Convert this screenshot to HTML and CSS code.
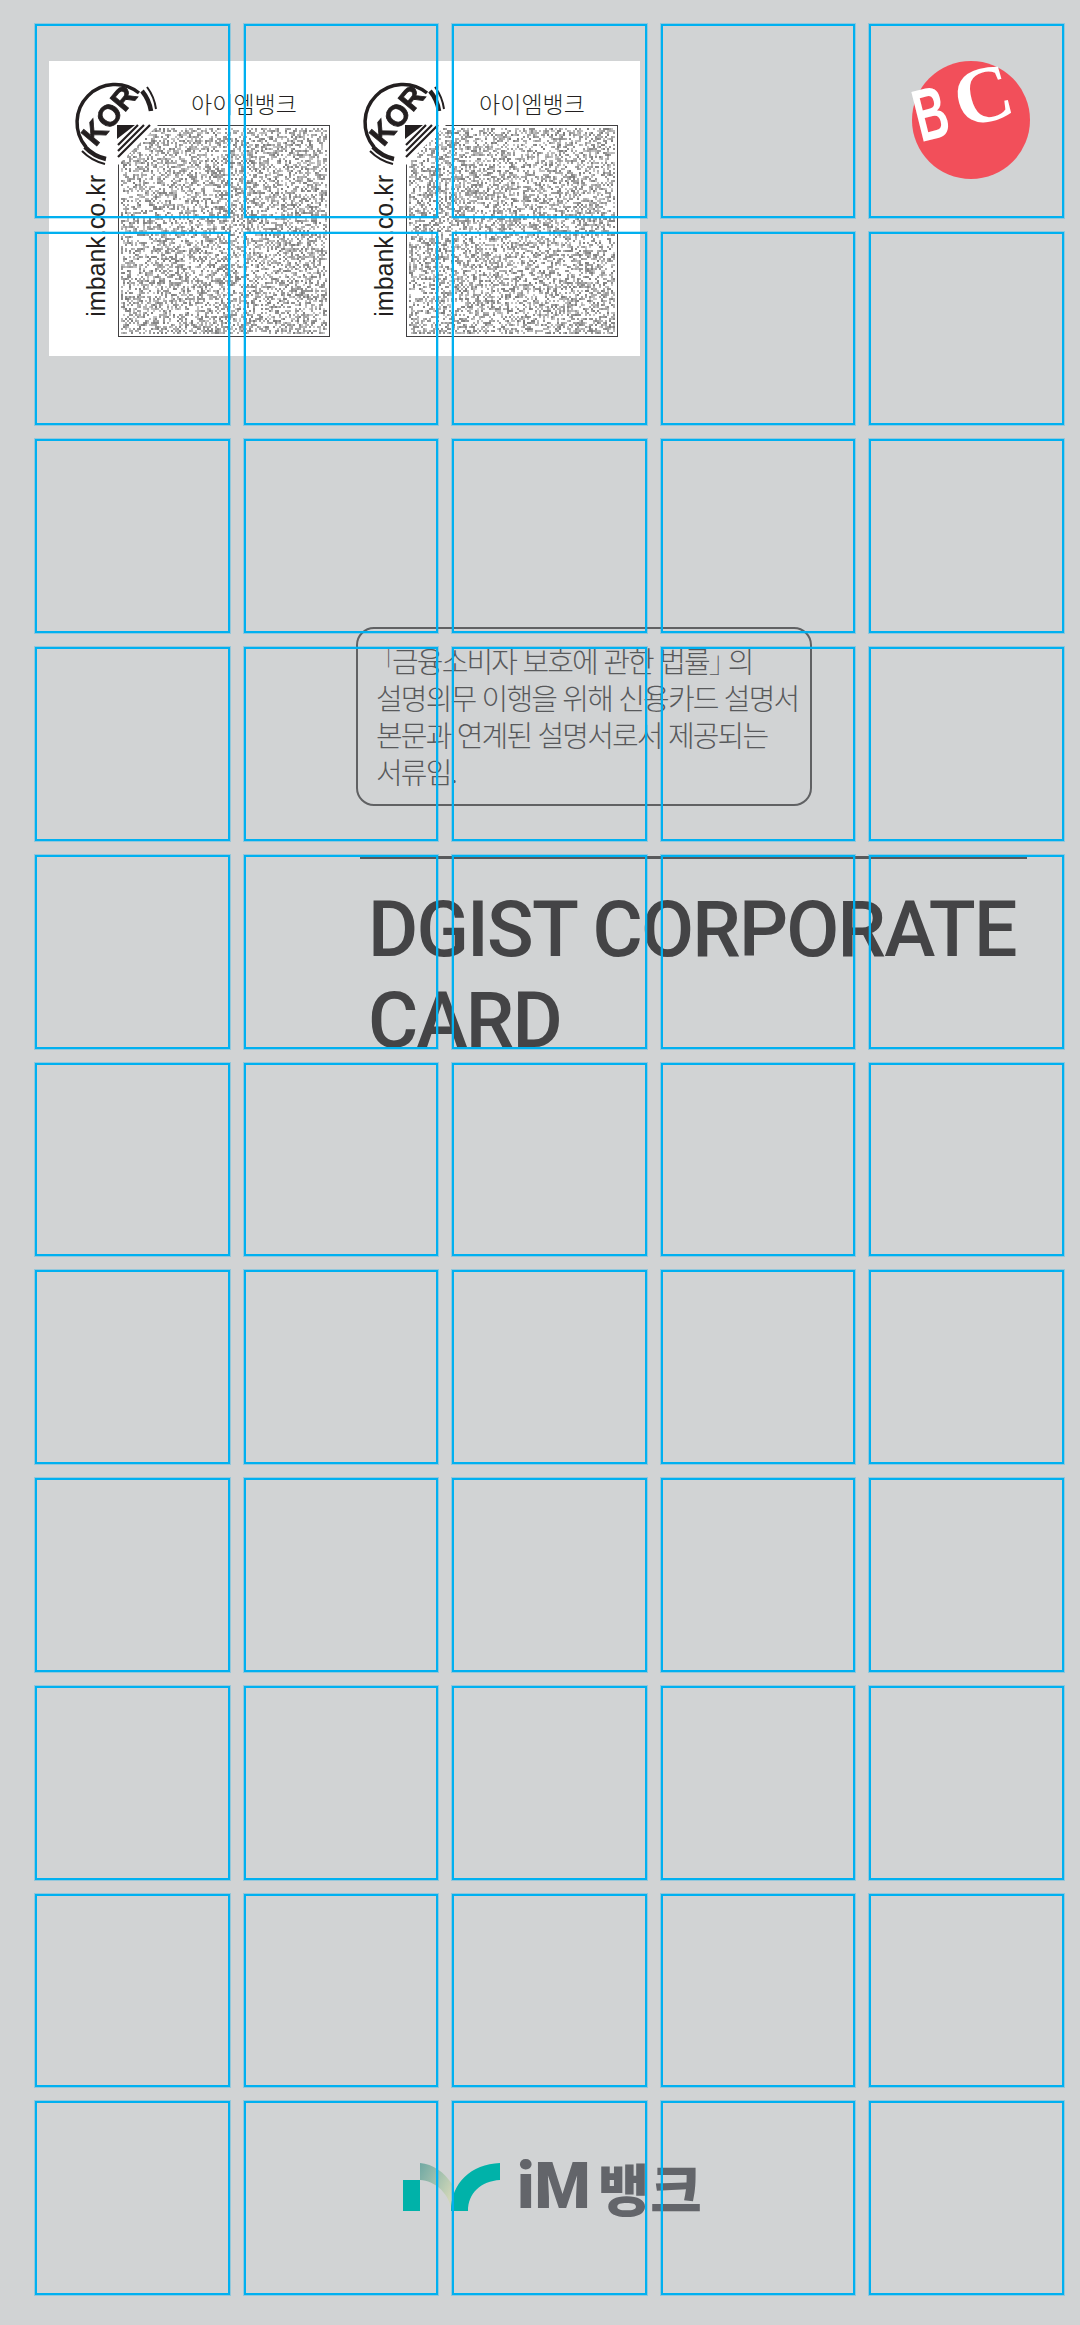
FILE: index.html
```html
<!DOCTYPE html>
<html lang="ko">

<head>
    <meta charset="UTF-8">
    <meta name="viewport" content="width=device-width, initial-scale=1.0">
    <title>DGIST CORPORATE CARD</title>
    <link rel="stylesheet" href="styles.css">
</head>

<body>
    <div class="page">
        <div class="top-row">
            <div class="qr-card">
                <div class="slip">
                    <div class="slip-url">imbank.co.kr</div>
                    <div class="slip-main">
                        <div class="slip-name">아이엠뱅크</div>
                        <canvas class="qr" width="212" height="212"></canvas>
                    </div>
                    <svg class="kor-badge" viewBox="0 0 84 90">
                        <path class="kor-ring" d="M12 67 A38 38 0 0 1 65 13" />
                        <path class="kor-band" d="M68 11 A41 41 0 0 1 77 31" />
                        <path class="kor-band thin" d="M73 7 A47 47 0 0 1 82 29" />
                        <path class="kor-band" d="M11 67 A41 41 0 0 0 32 79" />
                        <path class="kor-band thin" d="M8 71 A47 47 0 0 0 31 84" />
                        <text class="kor-text" transform="translate(43 42) rotate(-50)">KOR</text>
                        <polygon class="kor-mark" points="43,45 61,45 43,59" />
                        <path class="kor-stripes" d="M64 45 L44 65 M70 45 L44 71 M76 45 L44 77" />
                    </svg>
                </div>
                <div class="slip">
                    <div class="slip-url">imbank.co.kr</div>
                    <div class="slip-main">
                        <div class="slip-name">아이엠뱅크</div>
                        <canvas class="qr" width="212" height="212"></canvas>
                    </div>
                    <svg class="kor-badge" viewBox="0 0 84 90">
                        <path class="kor-ring" d="M12 67 A38 38 0 0 1 65 13" />
                        <path class="kor-band" d="M68 11 A41 41 0 0 1 77 31" />
                        <path class="kor-band thin" d="M73 7 A47 47 0 0 1 82 29" />
                        <path class="kor-band" d="M11 67 A41 41 0 0 0 32 79" />
                        <path class="kor-band thin" d="M8 71 A47 47 0 0 0 31 84" />
                        <text class="kor-text" transform="translate(43 42) rotate(-50)">KOR</text>
                        <polygon class="kor-mark" points="43,45 61,45 43,59" />
                        <path class="kor-stripes" d="M64 45 L44 65 M70 45 L44 71 M76 45 L44 77" />
                    </svg>
                </div>
            </div>
            <div class="bc-logo">
                <span class="bc-b">B</span><span class="bc-c">C</span>
            </div>
        </div>

        <div class="content">
            <div class="notice"><span class="bracket-open">「</span>금융소비자 보호에 관한 법률<span class="bracket-close">」</span>의<br>설명의무 이행을 위해 신용카드 설명서<br>본문과 연계된 설명서로서 제공되는<br>서류임.</div>
            <div class="title-block">
                <h1 class="title">DGIST CORPORATE CARD</h1>
            </div>
        </div>

        <div class="footer-logo">
            <svg class="im-mark" viewBox="0 0 97 48">
                <defs>
                    <linearGradient id="leaf" x1="0" y1="0" x2="1" y2="0.7">
                        <stop offset="0" stop-color="#6fa8a3" />
                        <stop offset="1" stop-color="#d0d6b8" />
                    </linearGradient>
                </defs>
                <rect class="im-teal" x="0" y="17" width="17" height="31" />
                <path fill="url(#leaf)" d="M17 0 C30 1 41 9 49 21 L48 44 C44 29 32 18 17 17 Z" />
                <path class="im-teal" d="M48 48 C48 20 68 1 97 0 L97 17 C78 18 65 30 65 48 Z" />
            </svg>
            <span class="im-latin">iM</span>
            <span class="im-korean">뱅크</span>
        </div>
    </div>

    <div class="guide-grid">
        <div class="guide"></div><div class="guide"></div><div class="guide"></div><div class="guide"></div><div class="guide"></div>
        <div class="guide"></div><div class="guide"></div><div class="guide"></div><div class="guide"></div><div class="guide"></div>
        <div class="guide"></div><div class="guide"></div><div class="guide"></div><div class="guide"></div><div class="guide"></div>
        <div class="guide"></div><div class="guide"></div><div class="guide"></div><div class="guide"></div><div class="guide"></div>
        <div class="guide"></div><div class="guide"></div><div class="guide"></div><div class="guide"></div><div class="guide"></div>
        <div class="guide"></div><div class="guide"></div><div class="guide"></div><div class="guide"></div><div class="guide"></div>
        <div class="guide"></div><div class="guide"></div><div class="guide"></div><div class="guide"></div><div class="guide"></div>
        <div class="guide"></div><div class="guide"></div><div class="guide"></div><div class="guide"></div><div class="guide"></div>
        <div class="guide"></div><div class="guide"></div><div class="guide"></div><div class="guide"></div><div class="guide"></div>
        <div class="guide"></div><div class="guide"></div><div class="guide"></div><div class="guide"></div><div class="guide"></div>
        <div class="guide"></div><div class="guide"></div><div class="guide"></div><div class="guide"></div><div class="guide"></div>
    </div>

    <script src="script.js"></script>
</body>

</html>
```

FILE: styles.css
```css
body {
    background: #d1d3d4;
    font-family: "Noto Sans CJK KR", "Noto Sans", sans-serif;
    margin: 0;
    width: 1080px;
    height: 2325px;
    position: relative;
    overflow: hidden;
}

.page {
    height: 2325px;
    display: flex;
    flex-direction: column;
}

.top-row {
    display: flex;
    justify-content: space-between;
    align-items: flex-start;
    padding: 61px 50px 0 49px;
}

.qr-card {
    background: #fff;
    width: 591px;
    height: 295px;
    padding: 0 0 0 25px;
    box-sizing: border-box;
    display: flex;
}

.slip {
    width: 288px;
    height: 295px;
    display: flex;
    position: relative;
    flex: none;
}

.slip-url {
    writing-mode: vertical-rl;
    transform: rotate(180deg);
    font-family: "Liberation Sans", Arial, sans-serif;
    font-size: 25px;
    line-height: 30px;
    color: #231f20;
    width: 30px;
    margin: 0 7px 39px 7px;
    align-self: flex-end;
    white-space: nowrap;
}

.slip-main {
    display: flex;
    flex-direction: column;
    width: 212px;
}

.slip-name {
    height: 64px;
    padding: 25px 0 0 40px;
    box-sizing: border-box;
    text-align: center;
    font-size: 23px;
    font-weight: 300;
    line-height: 34px;
    color: #231f20;
}

.qr {
    display: block;
    width: 212px;
    height: 212px;
}

.kor-badge {
    position: absolute;
    left: 0;
    top: 19px;
    width: 84px;
    height: 90px;
    overflow: visible;
}

.kor-ring {
    fill: none;
    stroke: #231f20;
    stroke-width: 3.5;
}

.kor-band {
    fill: none;
    stroke: #231f20;
    stroke-width: 4.5;
}

.kor-band.thin {
    stroke-width: 2;
}

.kor-text {
    font-family: "Liberation Sans", Arial, sans-serif;
    font-size: 30px;
    font-weight: 700;
    text-anchor: middle;
    fill: #231f20;
    stroke: #231f20;
    stroke-width: 0.8;
}

.kor-mark {
    fill: #231f20;
}

.kor-stripes {
    fill: none;
    stroke: #231f20;
    stroke-width: 2.2;
}

.bc-logo {
    width: 118px;
    height: 118px;
    border-radius: 50%;
    background: #f24f5a;
    color: #fff;
    font-family: "Liberation Serif", serif;
    font-size: 80px;
    font-weight: 700;
    line-height: 80px;
    position: relative;
}

.bc-b {
    position: absolute;
    left: -8px;
    top: 13px;
    font-family: "Liberation Sans", Arial, sans-serif;
    font-size: 74px;
    transform: rotate(-14deg) scaleX(0.62);
}

.bc-c {
    position: absolute;
    left: 42px;
    top: -6px;
    transform: rotate(-15deg);
}

.content {
    margin-left: 356px;
    width: 680px;
}

.notice {
    margin-top: 271px;
    width: 456px;
    height: 179px;
    box-sizing: border-box;
    border: 2px solid #606163;
    border-radius: 18px;
    padding: 13px 0 0 18px;
    font-size: 29px;
    font-weight: 300;
    line-height: 37px;
    letter-spacing: -1.85px;
    color: #58595b;
    white-space: nowrap;
}

.bracket-open {
    font-weight: 100;
    margin-left: -7px;
    letter-spacing: -6px;
}

.bracket-close {
    font-weight: 100;
    letter-spacing: -10px;
}

.title-block {
    margin: 50px 0 0 4px;
    width: 667px;
    border-top: 3px solid #58595b;
}

.title {
    margin: 26px 0 0 8px;
    width: 700px;
    font-family: Roboto, sans-serif;
    font-size: 77px;
    font-weight: 500;
    line-height: 91px;
    letter-spacing: -1.8px;
    color: #444446;
}

.footer-logo {
    margin-top: auto;
    margin-bottom: 112px;
    margin-left: 403px;
    display: flex;
    align-items: center;
    height: 52px;
}

.im-mark {
    width: 97px;
    height: 48px;
    flex: none;
}

.im-teal {
    fill: #00b2a9;
}

.im-latin {
    margin-left: 17px;
    font-family: Roboto, sans-serif;
    font-size: 64px;
    font-weight: 900;
    line-height: 52px;
    color: #63656a;
}

.im-korean {
    margin-left: 7px;
    font-size: 56px;
    font-weight: 900;
    line-height: 52px;
    letter-spacing: 1px;
    color: #63656a;
}

.guide-grid {
    position: absolute;
    left: 35px;
    top: 24px;
    width: 1029px;
    height: 2271px;
    display: grid;
    grid-template-columns: repeat(5, 1fr);
    grid-template-rows: repeat(11, 1fr);
    gap: 14px;
}

.guide {
    border: 2px solid #00b0f0;
    box-shadow: 0 0 0 1px rgba(0, 176, 240, 0.3);
}
```

FILE: script.js
```js
// speckle for the printed QR codes
function speckle(canvas, seed) {
    const ctx = canvas.getContext('2d');
    const w = canvas.width;
    const h = canvas.height;
    let s = seed;
    function rnd() {
        s = (s * 1664525 + 1013904223) % 4294967296;
        return s / 4294967296;
    }

    ctx.fillStyle = '#fff';
    ctx.fillRect(0, 0, w, h);
    for (let y = 3; y < h - 3; y += 2) {
        for (let x = 3; x < w - 3; x += 2) {
            if (rnd() < 0.46) {
                const g = 125 + Math.floor(rnd() * 75);
                ctx.fillStyle = 'rgb(' + g + ',' + g + ',' + g + ')';
                ctx.fillRect(x, y, 2, 2);
            }
        }
    }
    ctx.strokeStyle = '#414042';
    ctx.lineWidth = 1;
    ctx.strokeRect(0.5, 0.5, w - 1, h - 1);

    // corner is left white under the badge
    ctx.fillStyle = '#fff';
    ctx.beginPath();
    ctx.moveTo(0, 0);
    ctx.lineTo(40, 0);
    ctx.lineTo(0, 40);
    ctx.closePath();
    ctx.fill();
}

document.querySelectorAll('.qr').forEach(function (canvas, i) {
    speckle(canvas, 12345 + i * 777);
});
```
